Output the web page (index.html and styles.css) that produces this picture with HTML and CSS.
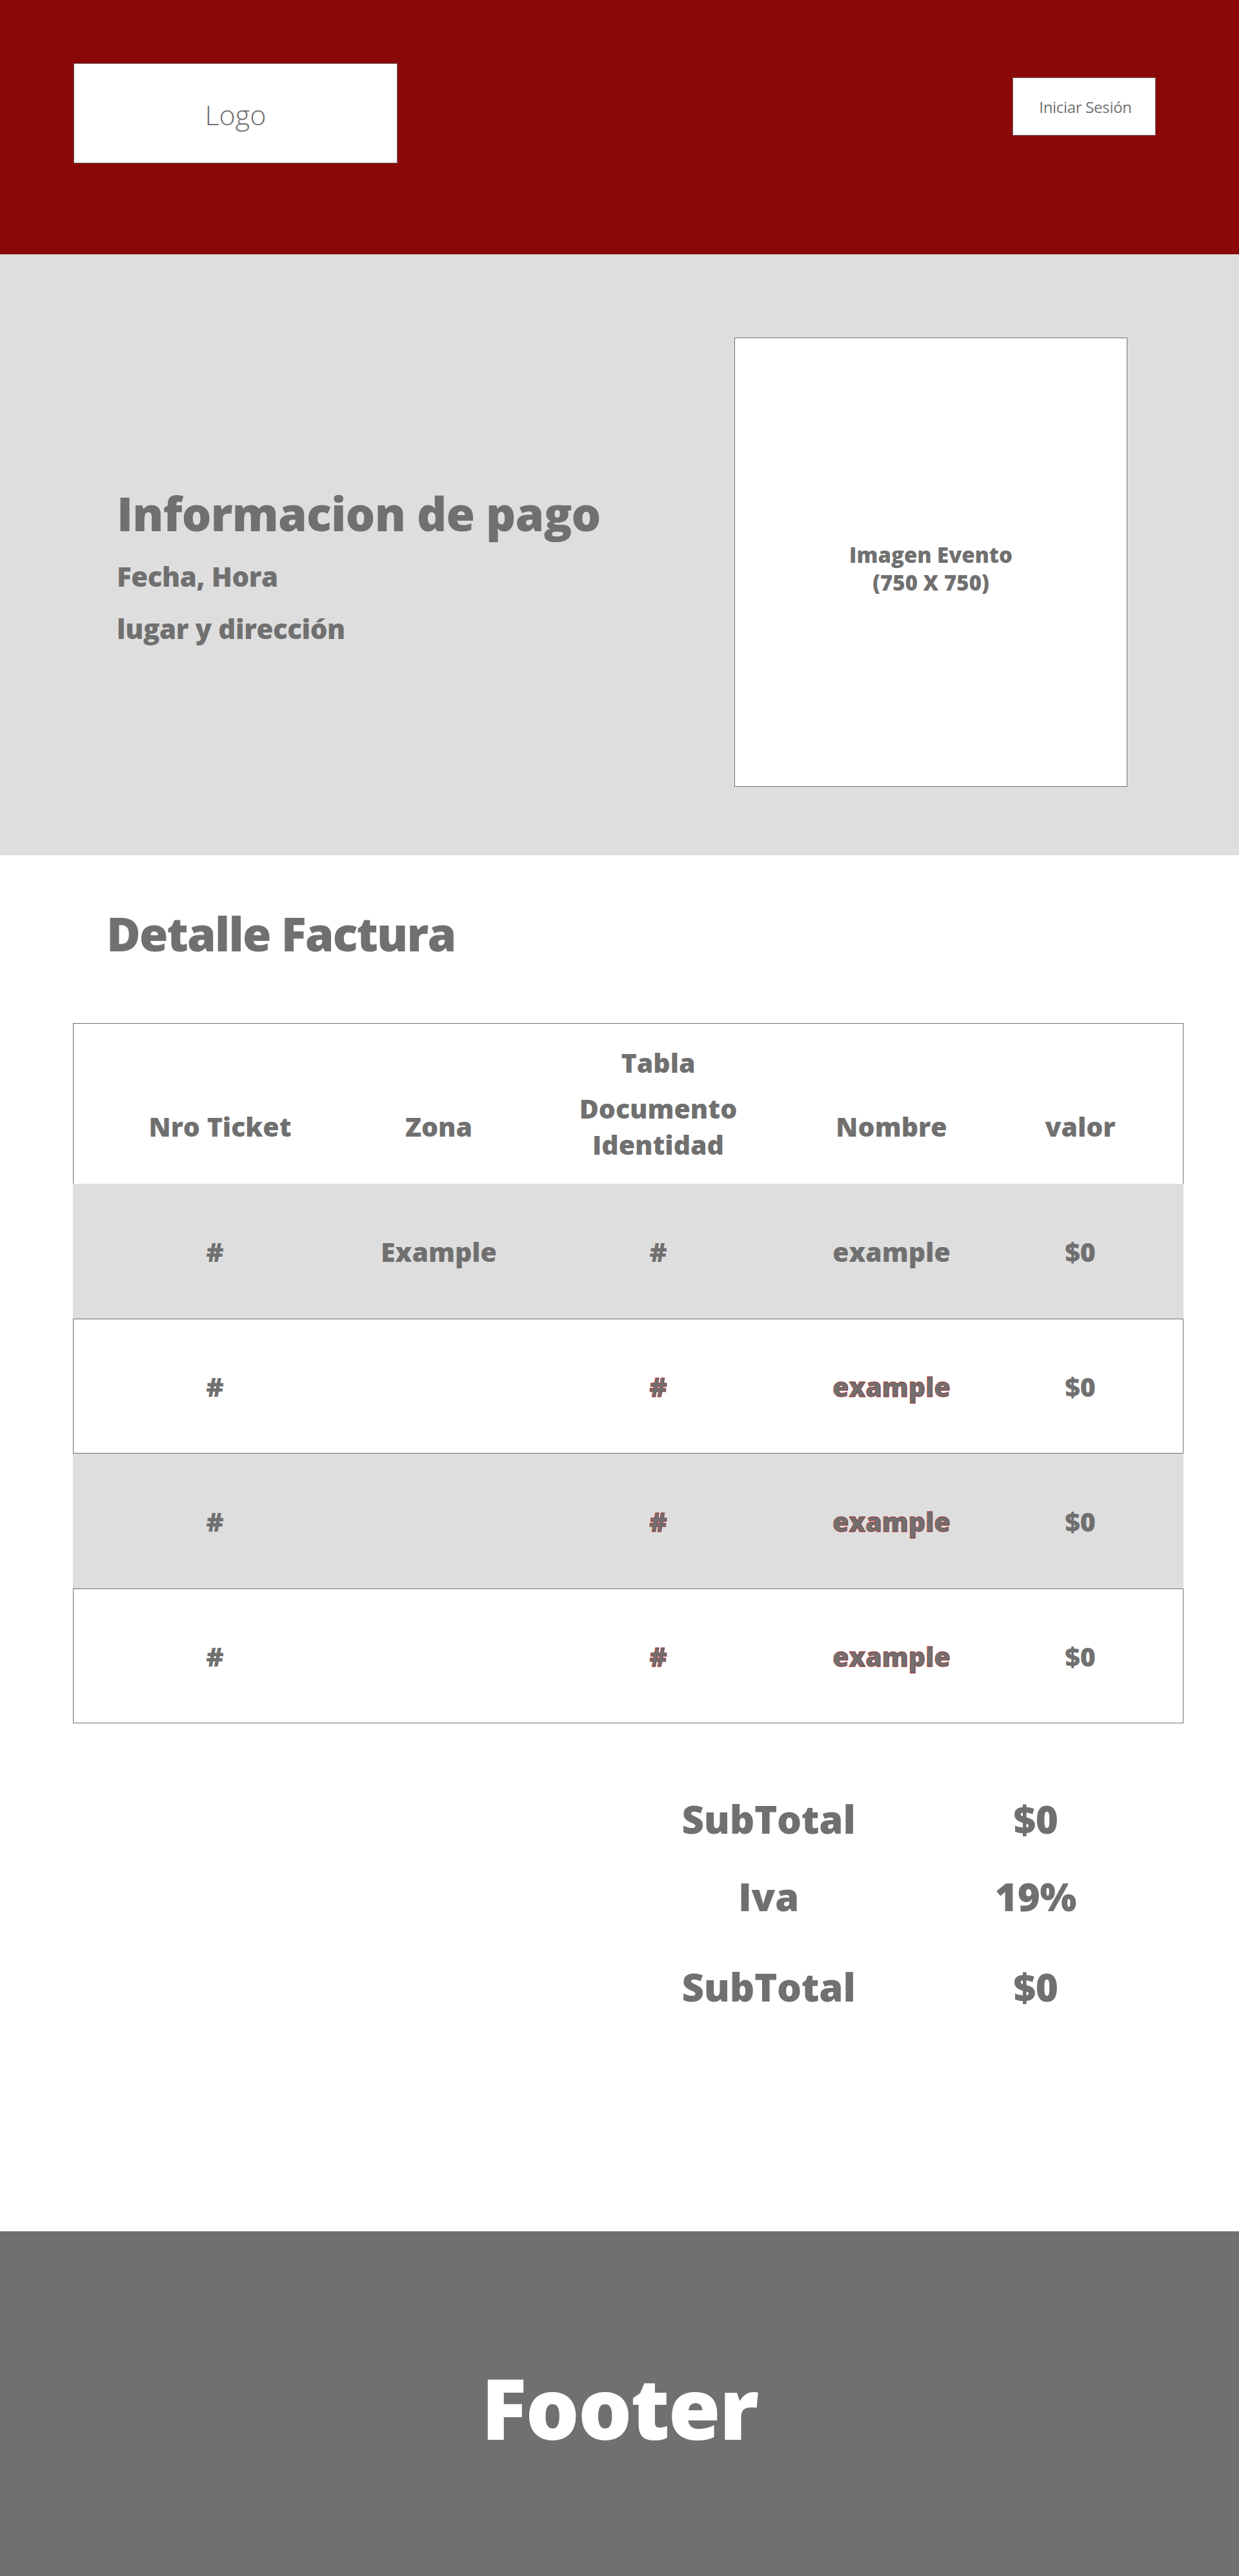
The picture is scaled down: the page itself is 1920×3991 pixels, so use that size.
FILE: index.html
```html
<!DOCTYPE html>
<html lang="es">
<head>
<meta charset="utf-8">
<title>Informacion de pago</title>
<link rel="stylesheet" href="styles.css">
</head>
<body>
<header class="topbar">
  <div class="logo">Logo</div>
  <button class="login">Iniciar Sesión</button>
</header>

<section class="hero">
  <div class="hero-text">
    <h1 class="hero-title">Informacion de pago</h1>
    <p class="hero-line first">Fecha, Hora</p>
    <p class="hero-line second">lugar y dirección</p>
  </div>
  <div class="event-img"><span>Imagen Evento<br>(750 X 750)</span></div>
</section>

<main class="invoice">
  <h2 class="invoice-title">Detalle Factura</h2>
  <div class="table">
    <div class="thead">
      <div class="th caption">Tabla</div>
      <div class="th c1">Nro Ticket</div>
      <div class="th c2">Zona</div>
      <div class="th c3">Documento<br>Identidad</div>
      <div class="th c4">Nombre</div>
      <div class="th c5">valor</div>
    </div>
    <div class="row alt">
      <div class="first">#</div><div>Example</div><div>#</div><div>example</div><div>$0</div>
    </div>
    <div class="row">
      <div class="first">#</div><div></div><div class="stroke">#</div><div class="stroke">example</div><div>$0</div>
    </div>
    <div class="row alt">
      <div class="first">#</div><div></div><div class="stroke">#</div><div class="stroke">example</div><div>$0</div>
    </div>
    <div class="row">
      <div class="first">#</div><div></div><div class="stroke">#</div><div class="stroke">example</div><div>$0</div>
    </div>
  </div>

  <div class="totals">
    <div>SubTotal</div><div>$0</div>
    <div>Iva</div><div>19%</div>
    <div class="grand">SubTotal</div><div class="grand">$0</div>
  </div>
</main>

<footer class="footer">Footer</footer>
</body>
</html>
```

FILE: styles.css
```css
* { box-sizing: border-box; }

body {
  margin: 0;
  font-family: "Open Sans", "Noto Sans", "Liberation Sans", sans-serif;
  color: #707070;
  background: #fff;
}

/* Header */
.topbar {
  height: 394px;
  background: #8B0808;
  display: flex;
  justify-content: space-between;
  align-items: flex-start;
  padding: 98px 129px 0 114px;
}

.logo {
  width: 502px;
  height: 155px;
  background: #fff;
  border: 1px solid #707070;
  display: flex;
  align-items: center;
  justify-content: center;
  font-weight: 300;
  font-size: 43px;
  line-height: 1;
  padding-top: 3px;
  color: #707070;
}

.login {
  margin-top: 22px;
  width: 222px;
  height: 90px;
  background: #fff;
  border: 1px solid #707070;
  font-family: "Open Sans", "Noto Sans", sans-serif;
  font-weight: 400;
  font-size: 24px;
  letter-spacing: -0.3px;
  color: #707070;
  padding: 0 0 0 4px;
}

/* Hero */
.hero {
  height: 931px;
  background: #DEDEDE;
  display: flex;
  justify-content: space-between;
  align-items: flex-start;
  padding: 129px 173px 0 181px;
}

.hero-text {
  padding-top: 236px;
}

.hero-title {
  margin: 0;
  font-size: 72px;
  line-height: 72px;
  font-weight: 800;
  letter-spacing: -0.8px;
}

.hero-line {
  margin: 0;
  font-size: 42px;
  line-height: 42px;
  font-weight: 800;
  letter-spacing: -0.4px;
}

.hero-line.first { margin-top: 41px; }
.hero-line.second { margin-top: 39px; }

.event-img {
  width: 609px;
  height: 696px;
  background: #fff;
  border: 1px solid #707070;
  display: flex;
  align-items: center;
  justify-content: center;
  text-align: center;
  font-size: 33px;
  line-height: 43px;
  font-weight: 800;
  padding-top: 20px;
}

/* Invoice */
.invoice {
  padding: 85px 86px 349px 113px;
}

.invoice-title {
  margin: 0 0 103px 52px;
  font-size: 72px;
  line-height: 72px;
  font-weight: 800;
  letter-spacing: -1.8px;
}

.table {
  display: flex;
  flex-direction: column;
}

.thead,
.row {
  display: grid;
  grid-template-columns: 454px 224px 456px 267px 318px;
  text-align: center;
  font-size: 41px;
  line-height: 56px;
  font-weight: 800;
  border: 1px solid #707070;
}

.thead {
  height: 249px;
  border-bottom: none;
  grid-template-rows: auto auto;
  row-gap: 15px;
  align-items: center;
  padding-top: 32px;
  align-content: start;
}

.th { grid-row: 2; }
.th.c1 { grid-column: 1; }
.th.c2 { grid-column: 2; }
.th.c3 { grid-column: 3; }
.th.c4 { grid-column: 4; }
.th.c5 { grid-column: 5; }
.th.caption { grid-row: 1; grid-column: 3; }

.row {
  height: 209px;
  align-items: center;
}

.row .first { padding-right: 16px; }

.row.alt {
  background: #DEDEDE;
  border-color: transparent;
}

.stroke {
  -webkit-text-stroke: 0.8px #9a2a2a;
}

/* Totals */
.totals {
  display: grid;
  grid-template-columns: 370px 458px;
  justify-content: end;
  row-gap: 60px;
  margin-top: 118px;
  font-size: 60px;
  line-height: 60px;
  font-weight: 800;
  letter-spacing: -0.3px;
  text-align: center;
}

.totals .grand { margin-top: 20px; }

/* Footer */
.footer {
  height: 534px;
  background: #707070;
  color: #fff;
  display: flex;
  align-items: center;
  justify-content: center;
  padding-top: 11px;
  font-size: 131px;
  line-height: 1;
  font-weight: 800;
  letter-spacing: -2px;
}
```
